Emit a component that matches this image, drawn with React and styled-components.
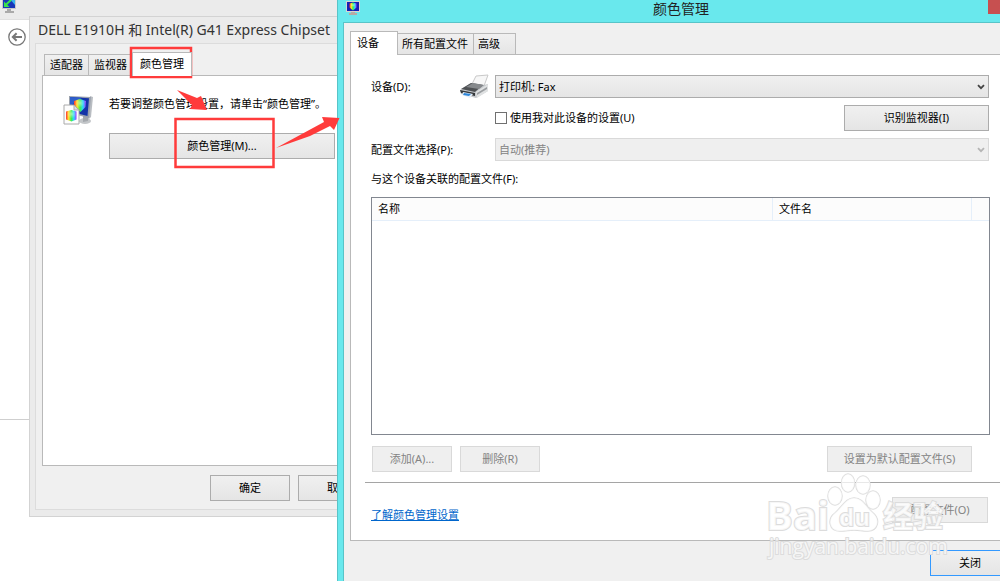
import React, { useState } from "react";
import styled, { createGlobalStyle } from "styled-components";

const GlobalStyle = createGlobalStyle`
  * {
    box-sizing: border-box;
  }
  body {
    margin: 0;
    background: #fff;
    color: #000;
    font-family: "Noto Sans", "Noto Sans CJK SC", sans-serif;
    font-size: 11px;
    line-height: 16px;
  }
  button, select, input {
    font: inherit;
    color: inherit;
  }
`;

const Desktop = styled.main`
  position: relative;
  height: 100vh;
  overflow: hidden;
`;

const Settings = styled.section`
  display: flex;
  flex-direction: column;
  height: 100%;
`;

const SettingsBar = styled.header`
  height: 20px;
  padding-left: 1px;
  background: #ebebeb;
  border-bottom: 1px solid #e0e0e0;
`;

const SettingsNav = styled.nav`
  height: 400px;
  width: 100%;
  padding: 8px 0 0 8px;
  border-bottom: 1px solid #cfcfcf;
`;

const BackButton = styled.button`
  display: block;
  padding: 0;
  border: 0;
  background: none;
  height: 18px;
`;

const SettingsPage = styled.div`
  width: 30px;
`;

const MonitorWindow = styled.section`
  position: absolute;
  left: 29px;
  top: 16px;
  width: 364px;
  padding: 0 6px 6px 5px;
  background: #ebebeb;
  border: 1px solid #d3d3d3;
`;

const MonitorTitle = styled.h1`
  margin: 0;
  padding-left: 3px;
  height: 26px;
  font-size: 14px;
  font-weight: 400;
  line-height: 26px;
  color: #333;
  white-space: nowrap;
`;

const MonitorClient = styled.div`
  padding: 8px 6px;
  background: #f0f0f0;
  border: 1px solid #dcdcdc;
`;

const Tabs = styled.div`
  display: flex;
  align-items: flex-end;
  padding-left: ${(props) => props.$indent || 0}px;
`;

const Tab = styled.button`
  height: ${(props) => (props.$active ? 24 : 21)}px;
  margin-bottom: ${(props) => (props.$active ? -1 : 0)}px;
  padding: 0 ${(props) => (props.$active ? 7 : 5)}px;
  padding-bottom: ${(props) => (props.$active ? 2 : 0)}px;
  border: 1px solid #b9b9b9;
  border-bottom: 0;
  background: ${(props) =>
    props.$active ? "#fff" : "linear-gradient(#f0f0f0, #e5e5e5)"};
  white-space: nowrap;
  position: relative;
  z-index: ${(props) => (props.$active ? 1 : 0)};

  & + & {
    margin-left: -1px;
  }
`;

const DeviceTab = styled(Tab)`
  padding-left: ${(props) => (props.$active ? 6 : 4)}px;
  padding-right: ${(props) => (props.$active ? 18 : props.$wide ? 15 : 5)}px;
`;

const MonitorPanel = styled.div`
  height: 391px;
  padding: 19px 20px;
  display: flex;
  align-items: flex-start;
  gap: 16px;
  background: #fff;
  border: 1px solid #b9b9b9;
`;

const MonitorText = styled.div`
  display: flex;
  flex-direction: column;
  align-items: flex-start;
  gap: 21px;
  white-space: nowrap;

  p {
    margin: 0;
    padding-top: 1px;
  }
`;

const Button = styled.button`
  width: ${(props) => props.$width}px;
  height: 26px;
  padding: 0 4px;
  border: 1px solid #acacac;
  background: linear-gradient(#f0f0f0, #e5e5e5);
  white-space: nowrap;

  &:disabled {
    color: #838383;
    background: #efefef;
    border-color: #d9d9d9;
  }
`;

const DefaultButton = styled(Button)`
  border-color: #3399ff;
`;

const DialogButtons = styled.div`
  display: flex;
  justify-content: flex-end;
  gap: 8px;
  padding: ${(props) => (props.$outer ? "9px 0 8px" : "9px 1px 0 0")};
`;

const ColorWindow = styled.section`
  position: absolute;
  left: 337px;
  right: -23px;
  top: 0;
  padding: 0 6px 6px 5px;
  background: #69e8ed;
  border: 1px solid #58c4c8;
  border-top: 0;
`;

const TitleBar = styled.header`
  display: grid;
  grid-template-columns: 46px 1fr 46px;
  align-items: start;
  height: 22px;
  padding-left: 3px;
`;

const ColorTitle = styled.h2`
  margin: 0;
  font-size: 14px;
  font-weight: 400;
  line-height: 18px;
  text-align: center;
  color: #222;
`;

const CloseBox = styled.button`
  height: 14px;
  width: 28px;
  margin-left: 18px;
  padding: 0 0 0 11px;
  border: 0;
  background: #c75050;
  color: #fff;
  line-height: 12px;
  text-align: left;
`;

const ColorClient = styled.div`
  padding: 8px 6px 0;
  background: #f0f0f0;
  border: 1px solid #58c4c8;
  border-width: 1px 0 0 1px;
`;

const DevicePanel = styled.form`
  display: flex;
  flex-direction: column;
  padding: 20px 19px 17px 20px;
  background: #fff;
  border: 1px solid #b9b9b9;
`;

const Field = styled.div`
  display: grid;
  grid-template-columns: 124px 1fr;
  align-items: center;
  margin: 0 1px 7px 0;
`;

const FieldLabel = styled.div`
  display: flex;
  align-items: center;
  justify-content: space-between;
  height: 23px;
  padding-right: 5px;
`;

const SelectBox = styled.div`
  display: grid;
  align-items: center;

  select,
  svg {
    grid-area: 1 / 1;
  }

  svg {
    justify-self: end;
    margin-right: 4px;
    pointer-events: none;
    color: ${(props) => (props.$disabled ? "#b5b5b5" : "#444")};
  }
`;

const Select = styled.select`
  appearance: none;
  width: 100%;
  height: 23px;
  padding: 0 20px 0 3px;
  border: 1px solid #acacac;
  border-radius: 0;
  background: linear-gradient(#f0f0f0, #e5e5e5);

  &:disabled {
    color: #838383;
    opacity: 1;
    background: #efefef;
    border-color: #d9d9d9;
  }
`;

const OptionRow = styled.div`
  display: flex;
  align-items: center;
  justify-content: space-between;
`;

const CheckLabel = styled.label`
  display: flex;
  align-items: center;
  gap: 3px;
`;

const Checkbox = styled.input`
  appearance: none;
  width: 12px;
  height: 12px;
  margin: 0;
  border: 1px solid #707070;
  background: ${(props) => (props.checked ? "#707070" : "#fff")};
`;

const ListLabel = styled.div`
  margin: 3px 0 10px;
`;

const ProfileList = styled.div`
  height: 238px;
  border: 1px solid #828790;
`;

const ProfileTable = styled.table`
  width: 100%;
  table-layout: fixed;
  border-collapse: separate;
  border-spacing: 0;

  th {
    height: 23px;
    padding: 0 6px;
    font-weight: 400;
    text-align: left;
    background: #fcfcfc;
    border-right: 1px solid #e5effa;
    border-bottom: 1px solid #e5effa;
  }
  th:last-child {
    border-right: 0;
  }
`;

const ListActions = styled.div`
  display: flex;
  gap: 8px;
  padding: 11px 18px 10px 1px;

  button:last-child {
    margin-left: auto;
  }
`;

const Divider = styled.hr`
  width: calc(100% + 25px);
  margin: 0 -19px 0 -6px;
  border: 0;
  border-top: 1px solid #a5a5a5;
`;

const Footer = styled.div`
  display: flex;
  align-items: center;
  justify-content: space-between;
  padding: 14px 2px 0 0;
`;

const HelpLink = styled.a`
  color: #0066cc;
  margin-top: 10px;
`;

const Marks = styled.svg`
  position: absolute;
  left: 120px;
  top: 40px;
  pointer-events: none;
`;

const Watermark = styled.svg`
  position: absolute;
  right: 50px;
  top: 468px;
  pointer-events: none;
  font-family: "Open Sans", "Noto Sans CJK SC", sans-serif;
`;

const Chevron = () => (
  <svg width="8" height="8" viewBox="0 0 8 8" fill="none">
    <path d="M1 2.2 L4 5.2 L7 2.2" stroke="currentColor" strokeWidth="1.8" />
  </svg>
);

const DisplayIcon = () => (
  <svg width="16" height="14" viewBox="0 0 16 14" display="block">
    <path d="M1 -3h14v12H1z" fill="#c9c9c9" />
    <path d="M2 -2h12v10H2z" fill="#1736b8" />
    <path d="M8 -2h6v7z" fill="#36b1ef" />
    <path d="M4 5.500l6-5.500" fill="none" stroke="#3be34a" strokeWidth="2" />
    <path d="M3 1.500v5.500h5.500z" fill="#3be34a" />
    <path d="M6 9h4v2h3v2H4v-2h2z" fill="#aaa" />
  </svg>
);

const BackIcon = () => (
  <svg width="18" height="18" viewBox="0 0 18 18" fill="none" stroke="#777">
    <circle cx="9" cy="9" r="8.2" strokeWidth="1.3" />
    <path d="M14 9H5M8.6 5.2L4.8 9l3.8 3.8" strokeWidth="2" />
  </svg>
);

const Spectrum = ({ id }) => (
  <defs>
    <linearGradient id={id} x1="0" x2="1" y1="0" y2="0">
      <stop offset="0" stopColor="#f33" />
      <stop offset=".25" stopColor="#ffe52e" />
      <stop offset=".5" stopColor="#3df04a" />
      <stop offset=".75" stopColor="#2ad9ff" />
      <stop offset="1" stopColor="#a03cff" />
    </linearGradient>
    <radialGradient id={id + "Glow"} cx=".5" cy=".4" r=".45">
      <stop offset="0" stopColor="#fff" stopOpacity=".5" />
      <stop offset="1" stopColor="#fff" stopOpacity="0" />
    </radialGradient>
  </defs>
);

const TitleIcon = () => (
  <svg width="15" height="16" viewBox="0 -1 15 16">
    <Spectrum id="titleHue" />
    <path d="M0 0h14v11H0z" fill="#d8d5d0" />
    <path d="M1 1h12v9H1z" fill="#1420b4" />
    <path d="M3.500 2.500l3.500-1 3.500 1v4L7 9.500 3.500 6.500z" fill="url(#titleHue)" />
    <path d="M4 2.500h6v4H4z" fill="url(#titleHueGlow)" />
    <path d="M5 11h4v1h2v2H3v-2h2z" fill="#b7aaa4" />
  </svg>
);

const ColorIcon = () => (
  <svg width="30" height="30" viewBox="0 0 30 30">
    <Spectrum id="cubeHue" />
    <ellipse cx="22" cy="26" rx="6" ry="3" fill="#c3c6c9" />
    <path d="M20 20l5 1v5l-5 1z" fill="#a4a8ad" />
    <path d="M27 1l3 1-2 20-3 3z" fill="#b9bdc2" />
    <path d="M6 1l22 1-2 21-20-5z" fill="#9aa1ad" />
    <path d="M7 2l19 1.200L24.500 21 7 16.500z" fill="#1434a8" />
    <path d="M7 2l12 .8L7 11z" fill="#2d5ecb" />
    <path d="M11 6l6-2 6 2-.5 6-5 5L11 11z" fill="url(#cubeHue)" />
    <path d="M12 4h10v10H12z" fill="url(#cubeHueGlow)" />
    <path d="M1 10h10l5 5v14H1z" fill="#fdfdfd" stroke="#aaa" />
    <path d="M11 10v5h5z" fill="#ddd" stroke="#aaa" />
    <path d="M3 16.500l5.500-1.500 5 1.500v8l-5 2-5.500-2z" fill="url(#cubeHue)" />
    <path d="M3 15h11v10H3z" fill="url(#cubeHueGlow)" />
  </svg>
);

const PrinterIcon = () => (
  <svg width="31" height="25" viewBox="0 0 31 25">
    <path d="M17 2l12-1-4 11-12-2z" fill="#f7f7f7" stroke="#c9c9c9" />
    <path d="M1 16l11-7 13 2 4-1v7l-12 7-15-4z" fill="#c5c8cb" />
    <path d="M2 15l10-6 12 2-8 7z" fill="#4e5154" />
    <path d="M7 13l7-4 11 2-5 4z" fill="#86898c" />
    <path d="M17 18l12-8v7l-11 7z" fill="#dfe1e2" />
    <path d="M18 19l10-6v2l-10 6z" fill="#9a9da0" />
    <path d="M1 16l15 3v3L2 19z" fill="#34373a" />
    <path d="M4 18l10 2-3 4-8-3z" fill="#e4eef8" />
    <path d="M5 19l7 1-2 2-6-1z" fill="#2f86d8" />
  </svg>
);

const RedMarks = () => (
  <Marks width="222" height="132" viewBox="0 0 222 132">
    <g fill="none" stroke="#ff3b3b" strokeWidth="2.500">
      <path d="M11 8h60v29H11z" />
      <path d="M55.500 79h98v48h-98z" />
    </g>
    <g fill="#ff3b3b">
      <path d="M57 50l20 8 4-2 6 14-17-1 2-4z" />
      <path d="M156 108l48-26-2-5 17.500 1-5.500 12-4-4-20 10z" />
    </g>
  </Marks>
);

const BaiduMark = () => (
  <Watermark width="185" height="95" viewBox="0 0 185 95">
    <g
      fill="#fff"
      fillOpacity=".75"
      stroke="#dcdcdc"
      strokeWidth="1.5"
      paintOrder="stroke"
    >
      <ellipse cx="70" cy="28" rx="7" ry="9" />
      <ellipse cx="83" cy="15" rx="6.500" ry="9" />
      <ellipse cx="98" cy="17" rx="7" ry="9" />
      <ellipse cx="108" cy="32" rx="7" ry="9" />
      <path d="M89 30c9 0 12 9 18 14 10 8 5 19-4 19-6 0-9-1-14-1s-8 1-14 1c-11 0-13-12-5-18 8-7 11-15 19-15z" />
      <g strokeWidth="2" fontWeight="700">
        <text x="1" y="62" fontSize="40">
          Bai
        </text>
        <text x="74" y="58" fontSize="24">
          du
        </text>
        <text x="118" y="59" fontSize="30">
          经验
        </text>
      </g>
      <text x="4" y="86" fontSize="21" strokeWidth="2">
        jingyan.baidu.com
      </text>
    </g>
  </Watermark>
);

const MonitorDialog = () => (
  <MonitorWindow>
    <MonitorTitle>DELL E1910H 和 Intel(R) G41 Express Chipset</MonitorTitle>
    <MonitorClient>
      <Tabs role="tablist" $indent={2}>
        <Tab role="tab">适配器</Tab>
        <Tab role="tab">监视器</Tab>
        <Tab role="tab" $active aria-selected="true">
          颜色管理
        </Tab>
      </Tabs>
      <MonitorPanel>
        <ColorIcon />
        <MonitorText>
          <p>若要调整颜色管理设置，请单击“颜色管理”。</p>
          <Button $width={226}>颜色管理(M)...</Button>
        </MonitorText>
      </MonitorPanel>
      <DialogButtons>
        <Button $width={80}>确定</Button>
        <Button $width={80}>取消</Button>
      </DialogButtons>
    </MonitorClient>
  </MonitorWindow>
);

const ColorDialog = () => {
  const [useSettings, setUseSettings] = useState(false);

  return (
    <ColorWindow>
      <TitleBar>
        <TitleIcon />
        <ColorTitle>颜色管理</ColorTitle>
        <CloseBox aria-label="关闭">✕</CloseBox>
      </TitleBar>
      <ColorClient>
        <Tabs role="tablist">
          <DeviceTab role="tab" $active aria-selected="true">
            设备
          </DeviceTab>
          <DeviceTab role="tab">所有配置文件</DeviceTab>
          <DeviceTab role="tab" $wide>
            高级
          </DeviceTab>
        </Tabs>
        <DevicePanel onSubmit={(e) => e.preventDefault()}>
          <Field>
            <FieldLabel>
              <label htmlFor="device">设备(D):</label>
              <PrinterIcon />
            </FieldLabel>
            <SelectBox>
              <Select id="device">
                <option>打印机: Fax</option>
              </Select>
              <Chevron />
            </SelectBox>
          </Field>
          <Field>
            <span />
            <OptionRow>
              <CheckLabel>
                <Checkbox
                  type="checkbox"
                  checked={useSettings}
                  onChange={(e) => setUseSettings(e.target.checked)}
                />
                使用我对此设备的设置(U)
              </CheckLabel>
              <Button type="button" $width={145}>
                识别监视器(I)
              </Button>
            </OptionRow>
          </Field>
          <Field>
            <FieldLabel>
              <label htmlFor="profile">配置文件选择(P):</label>
            </FieldLabel>
            <SelectBox $disabled>
              <Select id="profile" disabled>
                <option>自动(推荐)</option>
              </Select>
              <Chevron />
            </SelectBox>
          </Field>
          <ListLabel id="profiles">与这个设备关联的配置文件(F):</ListLabel>
          <ProfileList>
            <ProfileTable aria-labelledby="profiles">
              <colgroup>
                <col width="65%" />
                <col />
                <col width="17" />
              </colgroup>
              <thead>
                <tr>
                  <th>名称</th>
                  <th>文件名</th>
                  <th />
                </tr>
              </thead>
            </ProfileTable>
          </ProfileList>
          <ListActions>
            <Button type="button" $width={80} disabled>
              添加(A)...
            </Button>
            <Button type="button" $width={80} disabled>
              删除(R)
            </Button>
            <Button type="button" $width={145} disabled>
              设置为默认配置文件(S)
            </Button>
          </ListActions>
          <Divider />
          <Footer>
            <HelpLink href="#help">了解颜色管理设置</HelpLink>
            <Button type="button" $width={96} disabled>
              配置文件(O)
            </Button>
          </Footer>
        </DevicePanel>
        <DialogButtons $outer>
          <DefaultButton $width={80}>关闭</DefaultButton>
        </DialogButtons>
      </ColorClient>
    </ColorWindow>
  );
};

const App = () => (
  <>
    <GlobalStyle />
    <Desktop>
      <Settings>
        <SettingsBar>
          <DisplayIcon />
        </SettingsBar>
        <SettingsPage>
          <SettingsNav>
            <BackButton aria-label="返回">
              <BackIcon />
            </BackButton>
          </SettingsNav>
        </SettingsPage>
      </Settings>
      <MonitorDialog />
      <ColorDialog />
      <RedMarks />
      <BaiduMark />
    </Desktop>
  </>
);

export default App;
